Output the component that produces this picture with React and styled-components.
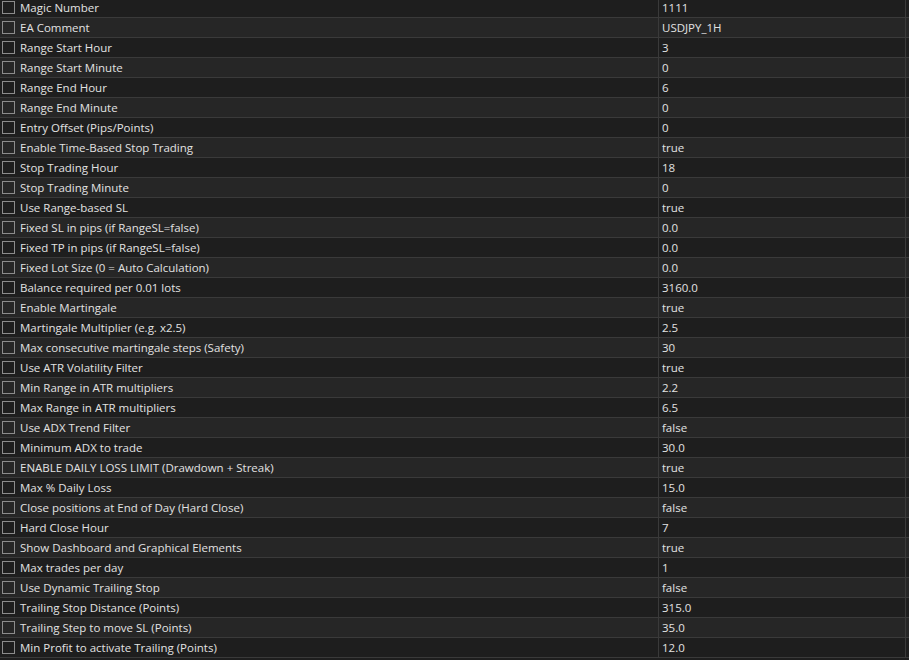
import React from 'react';
import styled, { createGlobalStyle } from 'styled-components';

const Global = createGlobalStyle`
  html, body {
    margin: 0;
    padding: 0;
    background: #1e1e1e;
    overflow: hidden;
  }
  body {
    font-family: 'Open Sans', 'Noto Sans', sans-serif;
  }
`;

const inputs = [
  ['Magic Number', '1111'],
  ['EA Comment', 'USDJPY_1H'],
  ['Range Start Hour', '3'],
  ['Range Start Minute', '0'],
  ['Range End Hour', '6'],
  ['Range End Minute', '0'],
  ['Entry Offset (Pips/Points)', '0'],
  ['Enable Time-Based Stop Trading', 'true'],
  ['Stop Trading Hour', '18'],
  ['Stop Trading Minute', '0'],
  ['Use Range-based SL', 'true'],
  ['Fixed SL in pips (if RangeSL=false)', '0.0'],
  ['Fixed TP in pips (if RangeSL=false)', '0.0'],
  ['Fixed Lot Size (0 = Auto Calculation)', '0.0'],
  ['Balance required per 0.01 lots', '3160.0'],
  ['Enable Martingale', 'true'],
  ['Martingale Multiplier (e.g. x2.5)', '2.5'],
  ['Max consecutive martingale steps (Safety)', '30'],
  ['Use ATR Volatility Filter', 'true'],
  ['Min Range in ATR multipliers', '2.2'],
  ['Max Range in ATR multipliers', '6.5'],
  ['Use ADX Trend Filter', 'false'],
  ['Minimum ADX to trade', '30.0'],
  ['ENABLE DAILY LOSS LIMIT (Drawdown + Streak)', 'true'],
  ['Max % Daily Loss', '15.0'],
  ['Close positions at End of Day (Hard Close)', 'false'],
  ['Hard Close Hour', '7'],
  ['Show Dashboard and Graphical Elements', 'true'],
  ['Max trades per day', '1'],
  ['Use Dynamic Trailing Stop', 'false'],
  ['Trailing Stop Distance (Points)', '315.0'],
  ['Trailing Step to move SL (Points)', '35.0'],
  ['Min Profit to activate Trailing (Points)', '12.0'],
];

const Viewport = styled.div`
  width: 909px;
  height: 660px;
  overflow: hidden;
  background: #1e1e1e;
`;

// list is scrolled a couple of pixels, so the first row is clipped at the top
const List = styled.div`
  display: flex;
  flex-direction: column;
  margin-top: -2px;
`;

const Row = styled.div`
  display: flex;
  height: 19px;
  border-bottom: 1px solid #3a3a3a;
  background: ${(p) => (p.$alt ? '#262626' : '#1e1e1e')};
  color: #e2e2e2;
  font-size: 11.5px;
  line-height: 19px;
`;

const NameCell = styled.div`
  display: flex;
  align-items: center;
  gap: 5px;
  width: 659px;
  padding-left: 2px;
  box-sizing: border-box;
  border-right: 1px solid #3a3a3a;
  white-space: nowrap;
`;

const Check = styled.span`
  width: 11px;
  height: 11px;
  border: 1px solid #8c8c8c;
  flex: none;
`;

const ValueCell = styled.div`
  width: 247px;
  padding-left: 3px;
  box-sizing: border-box;
  border-right: 1px solid #3a3a3a;
  white-space: nowrap;
`;

export default function App() {
  return (
    <Viewport>
      <Global />
      <List>
        {inputs.map(([name, value], i) => (
          <Row key={name} $alt={i % 2 === 1}>
            <NameCell>
              <Check />
              {name}
            </NameCell>
            <ValueCell>{value}</ValueCell>
          </Row>
        ))}
      </List>
    </Viewport>
  );
}
